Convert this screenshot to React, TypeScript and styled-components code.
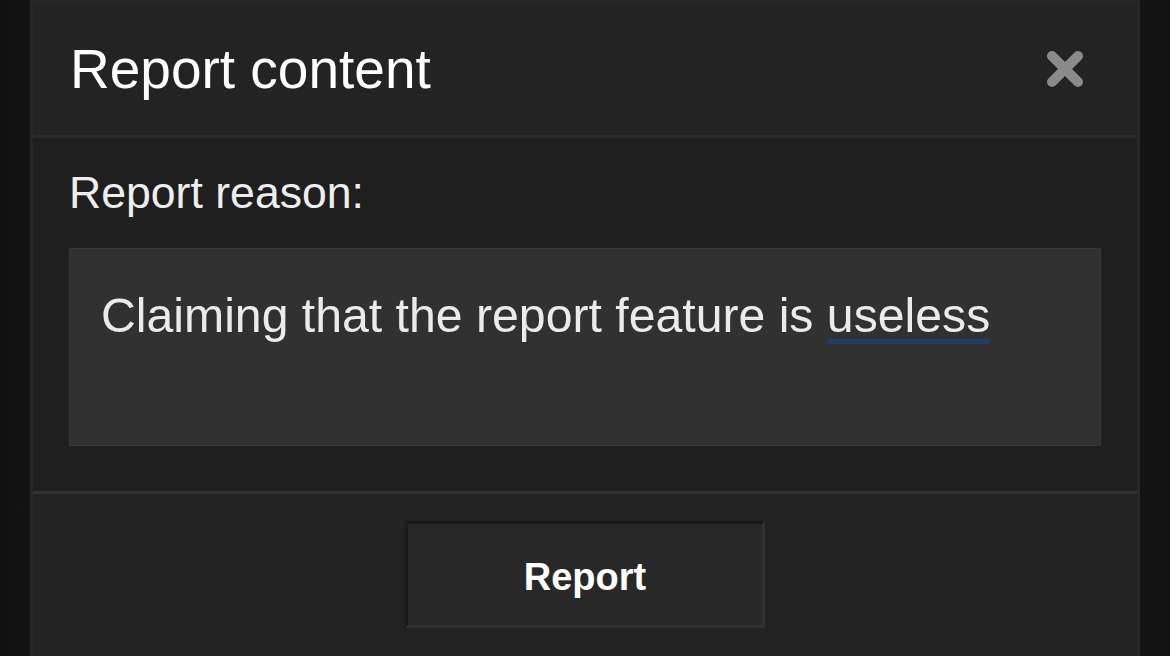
import React from "react";
import styled, { createGlobalStyle } from "styled-components";

const GlobalStyle = createGlobalStyle`
  html, body {
    margin: 0;
    padding: 0;
    width: 1170px;
    height: 656px;
    overflow: hidden;
    background: #111111;
  }
  #root {
    height: 656px;
  }
`;

const Backdrop = styled.div`
  height: 656px;
  display: flex;
  justify-content: center;
  background: linear-gradient(90deg, #0f0f0f 0px, #141414 30px, #141414 1140px, #121212 1170px);
  font-family: "Liberation Sans", Arial, Helvetica, sans-serif;
`;

const Modal = styled.section`
  width: 1110px;
  box-sizing: border-box;
  border: 3px solid #272727;
  border-top: none;
  border-bottom: none;
  background: #1f1f1f;
  display: flex;
  flex-direction: column;
`;

const Header = styled.header`
  height: 138px;
  box-sizing: border-box;
  padding: 0 53px 0 37px;
  display: flex;
  align-items: center;
  justify-content: space-between;
  background: #232323;
  border-top: 3px solid #272727;
  border-bottom: 3px solid #2a2a2a;
`;

const Title = styled.h1`
  margin: 0;
  font-size: 55px;
  font-weight: 400;
  line-height: 1;
  color: #ffffff;
`;

const CloseButton = styled.button`
  border: none;
  background: none;
  padding: 0;
  width: 38px;
  height: 38px;
  display: flex;
  cursor: pointer;
`;

const Body = styled.div`
  padding: 33px 36px 45px 36px;
  display: flex;
  flex-direction: column;
  gap: 32px;
  background: #1f1f1f;
`;

const Label = styled.label`
  font-size: 44.6px;
  line-height: 1;
  color: #eeeeee;
`;

const TextBox = styled.div`
  height: 198px;
  box-sizing: border-box;
  border: 1px solid #383838;
  background: #313131;
  padding: 38px 30px 0 31px;
  font-size: 48.2px;
  line-height: 1.2;
  color: #ebebeb;
`;

const Misspelled = styled.span`
  position: relative;
  &::after {
    content: "";
    position: absolute;
    left: 0;
    right: 0;
    bottom: -2px;
    height: 5px;
    border-radius: 3px;
    background: #243d66;
  }
`;

const Footer = styled.footer`
  flex: 1;
  border-top: 3px solid #333333;
  background: #222222;
  display: flex;
  justify-content: center;
  align-items: flex-start;
  padding-top: 27px;
`;

const ActionButton = styled.button`
  width: 360px;
  height: 107px;
  box-sizing: border-box;
  border-style: solid;
  border-width: 3px;
  border-color: #1a1a1a #323232 #323232 #1a1a1a;
  background: #282828;
  color: #ffffff;
  font-family: "Liberation Sans", Arial, Helvetica, sans-serif;
  font-size: 38px;
  font-weight: 700;
  display: flex;
  align-items: center;
  justify-content: center;
  padding: 6px 0 0 0;
  cursor: pointer;
`;

const CloseIcon = () => (
  <svg width="38" height="38" viewBox="0 0 38 38" aria-hidden="true">
    <g stroke="#8a8a8a" strokeWidth="10" strokeLinecap="round">
      <line x1="6" y1="6" x2="32" y2="32" />
      <line x1="32" y1="6" x2="6" y2="32" />
    </g>
  </svg>
);

export default function App() {
  return (
    <>
      <GlobalStyle />
      <Backdrop>
        <Modal>
          <Header>
            <Title>Report content</Title>
            <CloseButton aria-label="Close">
              <CloseIcon />
            </CloseButton>
          </Header>
          <Body>
            <Label>Report reason:</Label>
            <TextBox role="textbox">
              Claiming that the report feature is <Misspelled>useless</Misspelled>
            </TextBox>
          </Body>
          <Footer>
            <ActionButton>Report</ActionButton>
          </Footer>
        </Modal>
      </Backdrop>
    </>
  );
}
